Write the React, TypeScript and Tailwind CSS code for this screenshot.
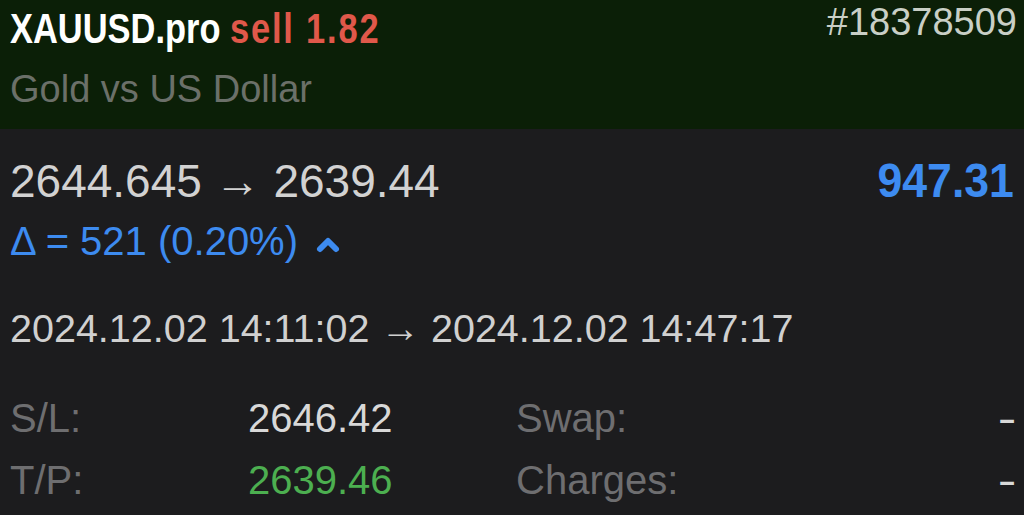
import { ChevronUp } from 'lucide-react'

export default function App() {
  return (
    <div className="w-[1024px] h-[515px] overflow-hidden bg-[#1c1c1e] font-['Liberation_Sans',Arial,sans-serif]">
      {/* Header */}
      <div className="h-[129px] bg-[#0b1f07] pl-[10px] pr-[7px] flex justify-between">
        <div className="flex flex-col">
          <div className="mt-[4px] origin-left scale-x-[0.82] whitespace-nowrap font-bold text-[42px] leading-[50px]">
            <span className="text-white">XAUUSD.pro</span>{' '}
            <span className="text-[#e0584a] tracking-[2.2px]">sell 1.82</span>
          </div>
          <div className="mt-[15px] text-[38px] leading-[40px] text-[#6b7069]">Gold vs US Dollar</div>
        </div>
        <div className="mt-[2px] text-[38px] leading-[40px] text-[#c9cfc6]">#18378509</div>
      </div>

      {/* Body */}
      <div className="px-[10px]">
        <div className="flex justify-between items-baseline mt-[26px]">
          <div className="text-[46px] leading-[50px] text-[#d2d2d2]">2644.645 → 2639.44</div>
          <div className="origin-right scale-x-[0.91] font-bold text-[49px] leading-[50px] text-[#3d8bf0]">
            947.31
          </div>
        </div>
        <div className="mt-[12px] flex items-center gap-[14px] text-[40px] leading-[46px] text-[#3d8bf0]">
          <span>Δ = 521 (0.20%)</span>
          <ChevronUp size={32} strokeWidth={4.5} className="mt-[8px]" />
        </div>

        <div className="mt-[41px] text-[39.5px] leading-[46px] text-[#d0d0d0]">
          2024.12.02 14:11:02 → 2024.12.02 14:47:17
        </div>

        <div className="mt-[44px] mr-[-2px] grid grid-cols-[238px_268px_1fr_auto] gap-y-[16px] text-[40px] leading-[46px]">
          <span className="text-[#6e6e70]">S/L:</span>
          <span className="text-[#d8d8d8]">2646.42</span>
          <span className="text-[#6e6e70]">Swap:</span>
          <span className="text-[#d8d8d8] scale-x-[1.4] origin-right">-</span>
          <span className="text-[#6e6e70]">T/P:</span>
          <span className="text-[#4caf50]">2639.46</span>
          <span className="text-[#6e6e70]">Charges:</span>
          <span className="text-[#d8d8d8] scale-x-[1.4] origin-right">-</span>
        </div>
      </div>
    </div>
  )
}
